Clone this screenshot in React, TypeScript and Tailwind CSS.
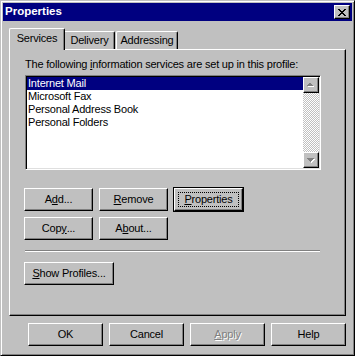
import React from "react";

const raised =
  "border border-t-white border-l-white border-r-black border-b-black shadow-[inset_-1px_-1px_#808080]";

function Btn({
  w,
  children,
  def,
  disabled,
}: {
  w: string;
  children: React.ReactNode;
  def?: boolean;
  disabled?: boolean;
}) {
  return (
    <div
      className={`${w} h-[23px] shrink-0 flex items-stretch bg-[#c0c0c0] p-[3px] ${raised} ${
        def ? "ring-1 ring-black" : ""
      }`}
    >
      <span
        className={`flex-1 flex items-center justify-center leading-none ${
          def ? "border border-dotted border-black" : ""
        } ${disabled ? "text-[#808080] [text-shadow:1px_1px_#fff]" : "text-black"}`}
      >
        {children}
      </span>
    </div>
  );
}

function Arrow({ up }: { up?: boolean }) {
  return (
    <div className={`w-[16px] h-[16px] flex items-center justify-center bg-[#c0c0c0] ${raised}`}>
      <svg width="8" height="5" viewBox="0 0 8 5" shapeRendering="crispEdges">
        {up ? (
          <>
            <path d="M4 1h1v1h1v1h1v1H1V3h1V2h1V1z" fill="#fff" />
            <path d="M3 0h1v1h1v1h1v1H0V2h1V1h1V0z" fill="#808080" />
          </>
        ) : (
          <>
            <path d="M1 1h7v1H7v1H6v1H5v1H4V4H3V3H2V2H1z" fill="#fff" />
            <path d="M0 0h7v1H6v1H5v1H4v1H3V3H2V2H1V1H0z" fill="#808080" />
          </>
        )}
      </svg>
    </div>
  );
}

export default function App() {
  const services = ["Internet Mail", "Microsoft Fax", "Personal Address Book", "Personal Folders"];

  return (
    <div
      className="w-[355px] h-[356px] bg-[#c0c0c0] border border-t-[#c0c0c0] border-l-[#c0c0c0] border-r-black border-b-black shadow-[inset_1px_1px_#fff,inset_-1px_-1px_#808080] p-[2px] flex flex-col text-[11px] tracking-[-0.2px] text-black select-none"
      style={{ fontFamily: '"Liberation Sans", Arial, sans-serif' }}
    >
      {/* Title bar */}
      <div className="h-[18px] bg-[#000080] flex items-center justify-between pl-[2px] pr-[2px]">
        <span className="text-white font-bold text-[11.5px] tracking-normal leading-none">Properties</span>
        <div className={`w-[16px] h-[14px] flex items-center justify-center bg-[#c0c0c0] ${raised}`}>
          <svg width="8" height="7" viewBox="0 0 8 7" shapeRendering="crispEdges">
            <path
              d="M0 0h2v1h1v1h2V1h1V0h2v1H7v1H6v1H5v1h1v1h1v1h1v1H6V6H5V5H3v1H2v1H0V6h1V5h1V4h1V3H2V2H1V1H0z"
              fill="#000"
            />
          </svg>
        </div>
      </div>

      {/* Body */}
      <div className="flex flex-col px-[6px] pt-[7px]">
        {/* Tabs */}
        <div className="flex items-start h-[21px]">
          <div className="relative z-10 w-[56px] h-[22px] bg-[#c0c0c0] border-l border-t border-r border-l-white border-t-white border-r-black rounded-t-[2px] shadow-[inset_-1px_0_#808080] flex items-center justify-center pb-[2px]">
            Services
          </div>
          <div className="mt-[3px] w-[50px] h-[18px] border-t border-r border-t-white border-r-black rounded-tr-[2px] shadow-[inset_-1px_0_#808080] flex items-center justify-center">
            Delivery
          </div>
          <div className="mt-[3px] ml-px w-[62px] h-[18px] border-l border-t border-r border-l-white border-t-white border-r-black rounded-t-[2px] shadow-[inset_-1px_0_#808080] flex items-center justify-center">
            Addressing
          </div>
        </div>

        {/* Tab panel */}
        <div className="w-[337px] h-[267px] border border-t-white border-l-white border-r-black border-b-black shadow-[inset_-1px_-1px_#808080] pl-[14px] pt-[8px] flex flex-col">
          <div className="h-[13px] leading-[13px] ml-px">
            The following <u>i</u>nformation services are set up in this profile:
          </div>

          <div className="mt-[4px] ml-px w-[296px] h-[95px] bg-white border border-t-[#808080] border-l-[#808080] border-r-white border-b-white shadow-[inset_1px_1px_#000,inset_-1px_-1px_#dfdfdf] p-px flex">
            <div className="flex-1 flex flex-col">
              {services.map((s, i) => (
                <div
                  key={s}
                  className={`h-[13px] leading-[13px] pl-[1px] ${
                    i === 0 ? "bg-[#000080] text-white" : ""
                  }`}
                >
                  {s}
                </div>
              ))}
            </div>
            <div className="w-[16px] flex flex-col">
              <Arrow up />
              <div className="flex-1 bg-[repeating-conic-gradient(#c0c0c0_0_25%,#fff_0_50%)] bg-[length:2px_2px]" />
              <Arrow />
            </div>
          </div>

          <div className="mt-[18px] flex gap-[6px]">
            <Btn w="w-[69px]">
              A<u>d</u>d...
            </Btn>
            <Btn w="w-[69px]">
              <u>R</u>emove
            </Btn>
            <Btn w="w-[69px]" def>
              <u>P</u>roperties
            </Btn>
          </div>
          <div className="mt-[6px] flex gap-[6px]">
            <Btn w="w-[69px]">
              Cop<u>y</u>...
            </Btn>
            <Btn w="w-[69px]">
              A<u>b</u>out...
            </Btn>
          </div>

          <div className="mt-[10px] ml-px w-[295px] h-[2px] border-t border-t-[#808080] border-b border-b-white" />

          <div className="mt-[10px] flex">
            <Btn w="w-[90px]">
              <u>S</u>how Profiles...
            </Btn>
          </div>
        </div>

        {/* Dialog buttons */}
        <div className="mt-[7px] ml-[19px] flex gap-[6px]">
          <Btn w="w-[75px]">OK</Btn>
          <Btn w="w-[75px]">Cancel</Btn>
          <Btn w="w-[75px]" disabled>
            <u>A</u>pply
          </Btn>
          <Btn w="w-[75px]">Help</Btn>
        </div>
      </div>
    </div>
  );
}
